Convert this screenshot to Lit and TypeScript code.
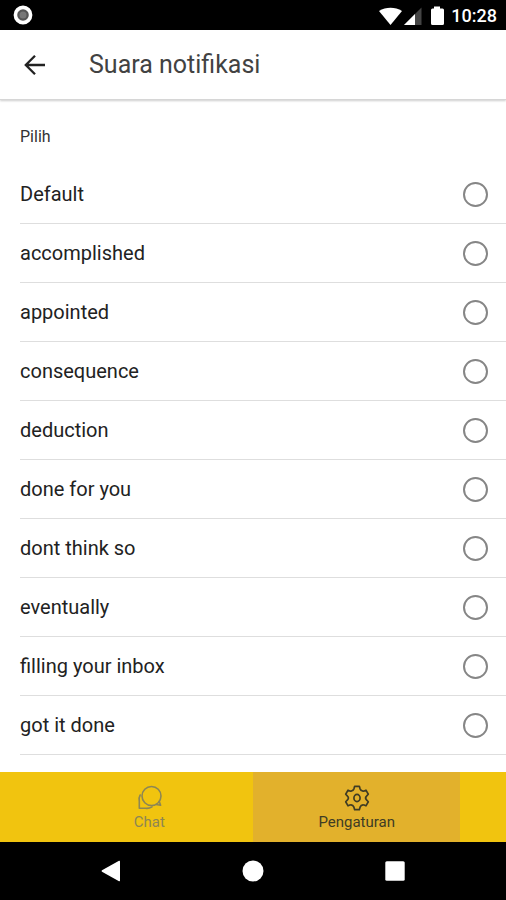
import { LitElement, html, css } from "lit";
import { customElement, state } from "lit/decorators.js";

@customElement("status-bar")
class StatusBar extends LitElement {
  static styles = css`
    :host {
      display: flex;
      align-items: center;
      justify-content: space-between;
      height: 30px;
      padding: 0 9px 0 13px;
      background: #000;
      color: #fff;
      font: 500 18px/30px Roboto, sans-serif;
    }
    svg {
      display: block;
    }
    .right {
      display: flex;
      align-items: center;
      gap: 6px;
      padding-top: 2px;
    }
  `;

  render() {
    return html`
      <svg width="20" height="20" viewBox="0 0 20 20" aria-hidden="true">
        <circle cx="10" cy="10" r="7.6" fill="#555" stroke="#fff" stroke-width="3.6" />
        <circle cx="10" cy="10" r="3.5" fill="#777" />
      </svg>
      <div class="right">
        <svg width="66" height="20" viewBox="0 0 66 20" aria-hidden="true">
          <path d="M0 5C7 .6 16 .6 23 5L11.500 19Z" fill="#fff" />
          <path d="M42.500 1.500V19H25Z" fill="#444" />
          <path d="M36 8V19H25Z" fill="#fff" />
          <path
            d="M55 .5h6v2h2.500q1.500 0 1.500 1.500V17.500q0 1.500-1.500 1.500h-10q-1.500 0-1.500-1.500V4q0-1.500 1.500-1.500h1.500Z"
            fill="#fff"
          />
        </svg>
        <span>10:28</span>
      </div>
    `;
  }
}

@customElement("system-nav")
class SystemNav extends LitElement {
  static styles = css`
    :host {
      display: flex;
      justify-content: center;
      height: 58px;
      background: #000;
    }
    button {
      display: flex;
      align-items: center;
      justify-content: center;
      width: 28%;
      padding: 0;
      border: 0;
      background: none;
    }
  `;

  render() {
    return html`
      <button aria-label="Back">
        <svg width="20" height="22" viewBox="0 0 20 22" fill="#fff">
          <path d="M18 .8Q19 .4 19 1.500V20.500Q19 21.600 18 21.200L1 11.800Q0 11 1 10.200Z" />
        </svg>
      </button>
      <button aria-label="Home">
        <svg width="22" height="22" viewBox="0 0 22 22" fill="#fff"><circle cx="11" cy="11" r="10.500" /></svg>
      </button>
      <button aria-label="Recents">
        <svg width="20" height="20" viewBox="0 0 20 20" fill="#fff">
          <rect x="0.300" y="0.300" width="19.400" height="19.400" rx="1.500" />
        </svg>
      </button>
    `;
  }
}

@customElement("tab-bar")
class TabBar extends LitElement {
  static styles = css`
    :host {
      display: block;
    }
    nav {
      display: flex;
      justify-content: center;
      height: 70px;
      background: #f1c40f;
    }
    a {
      display: flex;
      flex-direction: column;
      align-items: center;
      width: 41%;
      padding-top: 12px;
      box-sizing: border-box;
      color: #8d8654;
      font: 15px/20px Roboto, sans-serif;
      text-decoration: none;
    }
    a.active {
      background: #e2b12c;
      color: #3f3c24;
    }
    svg {
      display: block;
      fill: none;
      stroke: currentColor;
      stroke-linejoin: round;
      stroke-linecap: round;
    }
  `;

  render() {
    return html`
      <nav>
        <a href="#chat">
          <svg width="28" height="28" viewBox="0 0 28 28" stroke-width="1.600">
            <circle cx="16.500" cy="12" r="9.500" />
            <path d="M24.300 17.500L25.600 21.300L21 20.500" />
            <path d="M5.200 11Q3.400 14 4.300 17.500V24.300H10.500Q14 24.800 17 22.800" />
          </svg>
          <span>Chat</span>
        </a>
        <a href="#pengaturan" class="active" aria-current="page">
          <svg width="28" height="28" viewBox="-1 -1 30 30" stroke-width="1.800">
            <path
              d="M11.500 1.500H16.500L17.300 4.200Q18.500 7.400 21.700 6.500L23.600 5.600L26.100 10L24.200 12Q22.200 14 24.200 16L26.100 18L23.600 22.400L21.700 21.500Q18.500 20.600 17.300 23.800L16.500 26.500H11.500L10.700 23.800Q9.500 20.600 6.300 21.500L4.400 22.400L1.900 18L3.800 16Q5.800 14 3.800 12L1.900 10L4.400 5.600L6.300 6.500Q9.500 7.400 10.700 4.200Z"
            />
            <ellipse cx="14" cy="14" rx="3.300" ry="3.900" />
          </svg>
          <span>Pengaturan</span>
        </a>
      </nav>
    `;
  }
}

const SOUNDS = [
  "Default",
  "accomplished",
  "appointed",
  "consequence",
  "deduction",
  "done for you",
  "dont think so",
  "eventually",
  "filling your inbox",
  "got it done",
];

@customElement("app-root")
class AppRoot extends LitElement {
  static styles = css`
    :host {
      display: flex;
      flex-direction: column;
      height: 100vh;
      background: #fff;
      color: #222;
      font-family: Roboto, sans-serif;
    }
    header {
      display: flex;
      align-items: center;
      gap: 40px;
      height: 69px;
      padding: 0 20px;
      border-bottom: 1px solid #d6d6d6;
      box-shadow: 0 1px 2px rgba(0, 0, 0, 0.2);
      color: #424242;
    }
    .back {
      padding: 0;
      border: 0;
      background: none;
      color: #222;
    }
    .back svg {
      display: block;
    }
    h1 {
      margin: 0;
      font-size: 25px;
      line-height: 32px;
      font-weight: 400;
    }
    main {
      flex: 1;
      min-height: 0;
      overflow-y: auto;
      scrollbar-width: none;
    }
    fieldset {
      margin: 0;
      padding: 0 0 0 20px;
      border: 0;
    }
    legend {
      padding: 25px 0 16px;
      font-size: 16px;
      line-height: 24px;
      color: #333;
    }
    label {
      display: flex;
      align-items: center;
      justify-content: space-between;
      height: 58px;
      padding-right: 18px;
      border-bottom: 1px solid #dedede;
      font-size: 20px;
    }
    input {
      appearance: none;
      width: 25px;
      height: 25px;
      margin: 0;
      border: 2px solid #868686;
      border-radius: 50%;
    }
    input:checked {
      background: radial-gradient(#424242 45%, transparent 50%);
    }
  `;

  @state() private selected = "";

  render() {
    return html`
      <status-bar></status-bar>
      <header>
        <button class="back" aria-label="Kembali">
          <svg width="29" height="28" viewBox="0 0 29 28" fill="none" stroke="currentColor" stroke-width="2.300">
            <path d="M25 14H6M15 4.800L5.800 14L15 23.200" />
          </svg>
        </button>
        <h1>Suara notifikasi</h1>
      </header>
      <main>
        <fieldset>
          <legend>Pilih</legend>
          ${SOUNDS.map(
            (sound) => html`
              <label>
                <span>${sound}</span>
                <input
                  type="radio"
                  name="sound"
                  .value=${sound}
                  .checked=${this.selected === sound}
                  @change=${() => (this.selected = sound)}
                />
              </label>
            `
          )}
        </fieldset>
      </main>
      <tab-bar></tab-bar>
      <system-nav></system-nav>
    `;
  }
}
